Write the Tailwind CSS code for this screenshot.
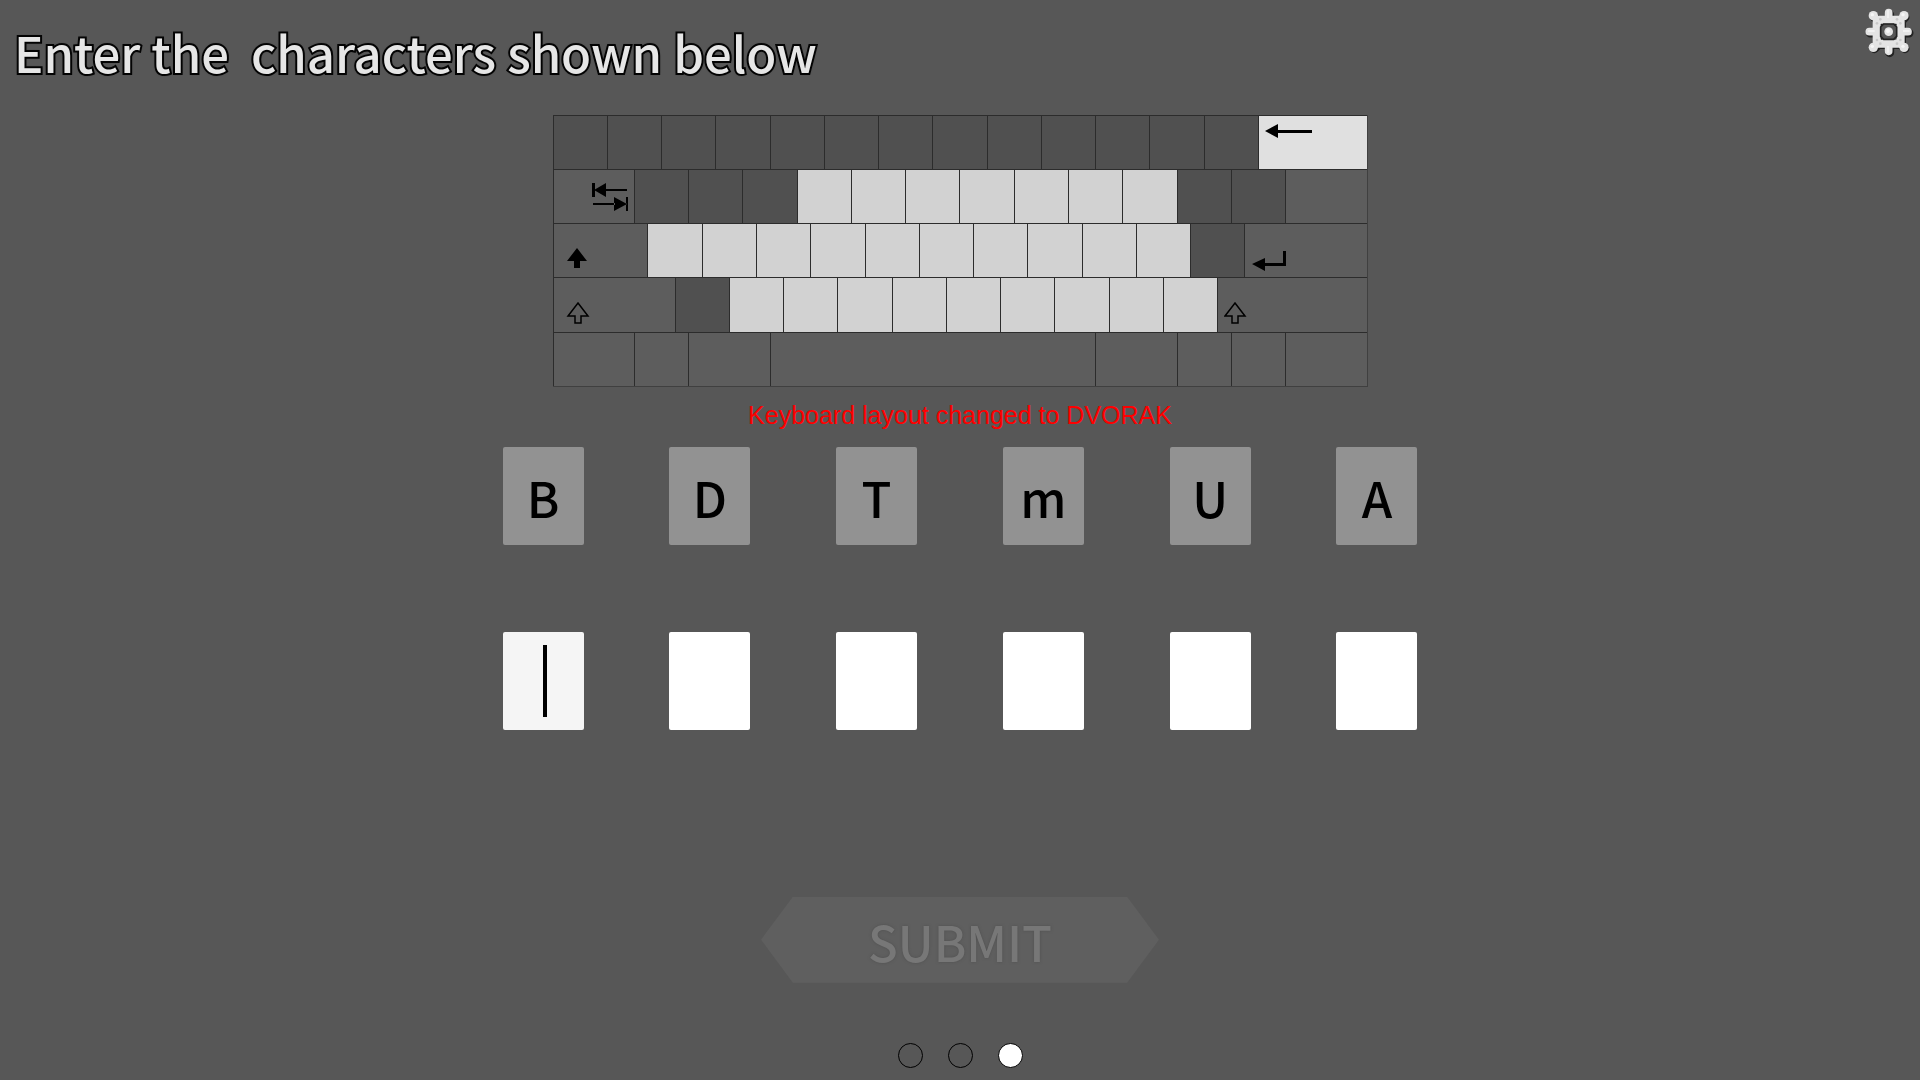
<!DOCTYPE html>
<html lang="en">

<head>
    <meta charset="UTF-8">
    <meta name="viewport" content="width=device-width, initial-scale=1.0">
    <title>Keyboard Test</title>
    <script src="https://cdn.jsdelivr.net/npm/@tailwindcss/browser@4"></script>
</head>

<body class="min-h-screen flex flex-col bg-[#575757] text-black font-medium font-['Noto_Sans_CJK_SC',sans-serif]">
    <!-- Header -->
    <header class="flex items-start justify-between h-[115px] pl-3.5">
        <h1 class="pt-4 text-[49px] leading-[72px] whitespace-pre text-[#e6e6e6] [-webkit-text-stroke:4px_#050505] [paint-order:stroke_fill] [text-shadow:0_0_3px_#000]">Enter the  characters shown below</h1>
        <button type="button" aria-label="Settings" class="size-[70px]">
            <svg class="size-full" viewBox="0 0 210 210">
                <g fill="none" stroke="#222" stroke-linecap="round" transform="translate(3 4)">
                    <rect x="81" y="59" width="72" height="72" rx="4" stroke-width="24"/>
                    <path d="M116 40v14M116 136v18M58 95h16M158 95h16M70 48l13 13M162 48l-13 13M70 142l13-13M162 142l-13-13" stroke-width="27"/>
                </g>
                <g fill="none" stroke="#e4e4e4" stroke-linecap="round">
                    <rect x="80" y="59" width="72" height="72" rx="4" stroke-width="24"/>
                    <path d="M116 38v20M116 132v22M58 95h20M154 95h20" stroke-width="23"/>
                    <path d="M70 47l16 16M162 47l-16 16M70 142l16-16M162 142l-16-16" stroke-width="20"/>
                </g>
                <g fill="#e4e4e4">
                    <circle cx="70" cy="47" r="14"/><circle cx="162" cy="47" r="14"/>
                    <circle cx="70" cy="142" r="14"/><circle cx="162" cy="142" r="14"/>
                </g>
                <path d="M101 72h30l9 9v28l-9 9h-30l-9-9V81z" fill="#555" stroke="#222" stroke-width="5"/>
                <circle cx="116" cy="95" r="13" fill="#e4e4e4"/>
                <g fill="#f6f6f6">
                    <path d="M112 30h4v24h-4zM112 138h4v20h-4zM54 91h20v4h-20zM159 91h20v4h-20z"/>
                    <circle cx="67" cy="44" r="5"/><circle cx="159" cy="44" r="5"/>
                    <circle cx="67" cy="139" r="5"/><circle cx="159" cy="139" r="5"/>
                    <circle cx="114" cy="93" r="6"/>
                </g>
                <g fill="#c8c8c8">
                    <circle cx="81" cy="70" r="4"/><circle cx="91" cy="58" r="4"/>
                    <circle cx="141" cy="58" r="4"/><circle cx="151" cy="70" r="4"/>
                    <circle cx="81" cy="120" r="4"/><circle cx="91" cy="131" r="4"/>
                    <circle cx="141" cy="131" r="4"/><circle cx="151" cy="120" r="4"/>
                </g>
            </svg>
        </button>
    </header>

    <main class="flex-1 flex flex-col items-center">
        <!-- Keyboard: 15 key units wide, 4 columns per unit -->
        <div role="img" aria-label="Keyboard layout" class="grid grid-cols-60 grid-rows-5 w-full max-w-[815px] aspect-[3/1] border-r border-b border-[#404040] *:border-l *:border-t *:border-[#2c2c2c]">
            <!-- Number row -->
            <div class="col-span-4 bg-[#505050]"></div>
            <div class="col-span-4 bg-[#505050]"></div>
            <div class="col-span-4 bg-[#505050]"></div>
            <div class="col-span-4 bg-[#505050]"></div>
            <div class="col-span-4 bg-[#505050]"></div>
            <div class="col-span-4 bg-[#505050]"></div>
            <div class="col-span-4 bg-[#505050]"></div>
            <div class="col-span-4 bg-[#505050]"></div>
            <div class="col-span-4 bg-[#505050]"></div>
            <div class="col-span-4 bg-[#505050]"></div>
            <div class="col-span-4 bg-[#505050]"></div>
            <div class="col-span-4 bg-[#505050]"></div>
            <div class="col-span-4 bg-[#505050]"></div>
            <div class="col-span-8 bg-[#e0e0e0] pl-1.5 pt-2">
                <svg class="w-12 h-4" viewBox="0 0 48 16"><path d="M0 7L13 0v14zM12 6h35v3H12z"/></svg>
            </div>

            <!-- Tab row -->
            <div class="col-span-6 bg-[#5d5d5d] flex justify-end pr-1.5 pt-[13px]">
                <svg class="w-9 h-7" viewBox="0 0 36 28"><path d="M0 0h3v14H0zM2 7L14 0v14zM13 6h22v2H13zM34 14h2v14h-2zM35 21L22 14v14zM1 20h22v2H1z"/></svg>
            </div>
            <div class="col-span-4 bg-[#505050]"></div>
            <div class="col-span-4 bg-[#505050]"></div>
            <div class="col-span-4 bg-[#505050]"></div>
            <div class="col-span-4 bg-[#d2d2d2]"></div>
            <div class="col-span-4 bg-[#d2d2d2]"></div>
            <div class="col-span-4 bg-[#d2d2d2]"></div>
            <div class="col-span-4 bg-[#d2d2d2]"></div>
            <div class="col-span-4 bg-[#d2d2d2]"></div>
            <div class="col-span-4 bg-[#d2d2d2]"></div>
            <div class="col-span-4 bg-[#d2d2d2]"></div>
            <div class="col-span-4 bg-[#505050]"></div>
            <div class="col-span-4 bg-[#505050]"></div>
            <div class="col-span-6 bg-[#5d5d5d]"></div>

            <!-- Caps row -->
            <div class="col-span-7 bg-[#5d5d5d] pl-3 pt-6">
                <svg class="w-6 h-6" viewBox="0 0 24 24"><path d="M11 0L21 13H14v7H8v-7H1z"/></svg>
            </div>
            <div class="col-span-4 bg-[#d2d2d2]"></div>
            <div class="col-span-4 bg-[#d2d2d2]"></div>
            <div class="col-span-4 bg-[#d2d2d2]"></div>
            <div class="col-span-4 bg-[#d2d2d2]"></div>
            <div class="col-span-4 bg-[#d2d2d2]"></div>
            <div class="col-span-4 bg-[#d2d2d2]"></div>
            <div class="col-span-4 bg-[#d2d2d2]"></div>
            <div class="col-span-4 bg-[#d2d2d2]"></div>
            <div class="col-span-4 bg-[#d2d2d2]"></div>
            <div class="col-span-4 bg-[#d2d2d2]"></div>
            <div class="col-span-4 bg-[#505050]"></div>
            <div class="col-span-9 bg-[#5d5d5d] pl-1.5 pt-6">
                <svg class="w-9 h-6" viewBox="0 0 36 24"><path d="M1 16L14 10v13zM13 15h19V3h3v15H13z"/></svg>
            </div>

            <!-- Shift row -->
            <div class="col-span-9 bg-[#5d5d5d] pl-3 pt-6">
                <svg class="w-6 h-6" viewBox="0 0 24 24" fill="none" stroke="#000" stroke-width="1.5"><path d="M12 1L22 14H15v7H9v-7H2z"/></svg>
            </div>
            <div class="col-span-4 bg-[#505050]"></div>
            <div class="col-span-4 bg-[#d2d2d2]"></div>
            <div class="col-span-4 bg-[#d2d2d2]"></div>
            <div class="col-span-4 bg-[#d2d2d2]"></div>
            <div class="col-span-4 bg-[#d2d2d2]"></div>
            <div class="col-span-4 bg-[#d2d2d2]"></div>
            <div class="col-span-4 bg-[#d2d2d2]"></div>
            <div class="col-span-4 bg-[#d2d2d2]"></div>
            <div class="col-span-4 bg-[#d2d2d2]"></div>
            <div class="col-span-4 bg-[#d2d2d2]"></div>
            <div class="col-span-11 bg-[#5d5d5d] pl-1.5 pt-6">
                <svg class="w-6 h-6" viewBox="0 0 24 24" fill="none" stroke="#000" stroke-width="1.5"><path d="M11 1L21 14H14v7H8v-7H1z"/></svg>
            </div>

            <!-- Bottom row -->
            <div class="col-span-6 bg-[#5d5d5d]"></div>
            <div class="col-span-4 bg-[#5d5d5d]"></div>
            <div class="col-span-6 bg-[#5d5d5d]"></div>
            <div class="col-span-24 bg-[#5d5d5d]"></div>
            <div class="col-span-6 bg-[#5d5d5d]"></div>
            <div class="col-span-4 bg-[#5d5d5d]"></div>
            <div class="col-span-4 bg-[#5d5d5d]"></div>
            <div class="col-span-6 bg-[#5d5d5d]"></div>
        </div>

        <p class="h-[60px] pt-3 text-[25px] leading-8 font-normal text-[#ff0000] font-['Liberation_Sans',sans-serif]">Keyboard layout changed to DVORAK</p>

        <!-- Target characters -->
        <div class="flex justify-between w-full max-w-[915px] text-[49px] leading-[72px] *:w-[81px] *:h-[98px] *:pt-3.5 *:rounded-xs *:bg-[#929292] *:text-center">
            <div>B</div>
            <div>D</div>
            <div>T</div>
            <div>m</div>
            <div>U</div>
            <div>A</div>
        </div>

        <!-- Answer boxes -->
        <form id="answer" class="w-full flex flex-col items-center">
            <div class="mt-[87px] flex justify-between w-full max-w-[915px] text-[49px]">
                <div class="relative">
                    <input type="text" maxlength="1" aria-label="Character 1" class="block w-[81px] h-[98px] rounded-xs bg-[#f5f5f5] text-center caret-transparent outline-none">
                    <span class="absolute inset-y-[13px] left-10 w-1 bg-black"></span>
                </div>
                <input type="text" maxlength="1" aria-label="Character 2" class="w-[81px] h-[98px] rounded-xs bg-white text-center outline-none">
                <input type="text" maxlength="1" aria-label="Character 3" class="w-[81px] h-[98px] rounded-xs bg-white text-center outline-none">
                <input type="text" maxlength="1" aria-label="Character 4" class="w-[81px] h-[98px] rounded-xs bg-white text-center outline-none">
                <input type="text" maxlength="1" aria-label="Character 5" class="w-[81px] h-[98px] rounded-xs bg-white text-center outline-none">
                <input type="text" maxlength="1" aria-label="Character 6" class="w-[81px] h-[98px] rounded-xs bg-white text-center outline-none">
            </div>
            <button type="submit" disabled class="mt-[167px] w-[398px] h-[86px] pt-0.5 bg-[#5f5f5f] text-[49px] leading-[72px] text-[#777] [text-shadow:0_0_3px_#505050] [clip-path:polygon(0_50%,8%_0,92%_0,100%_50%,92%_100%,8%_100%)]">SUBMIT</button>
        </form>
    </main>

    <!-- Step dots -->
    <footer class="flex justify-center gap-[25px] pb-3">
        <span class="size-[25px] rounded-full border border-black"></span>
        <span class="size-[25px] rounded-full border border-black"></span>
        <span class="size-[25px] rounded-full border border-black bg-white"></span>
    </footer>
</body>

</html>
